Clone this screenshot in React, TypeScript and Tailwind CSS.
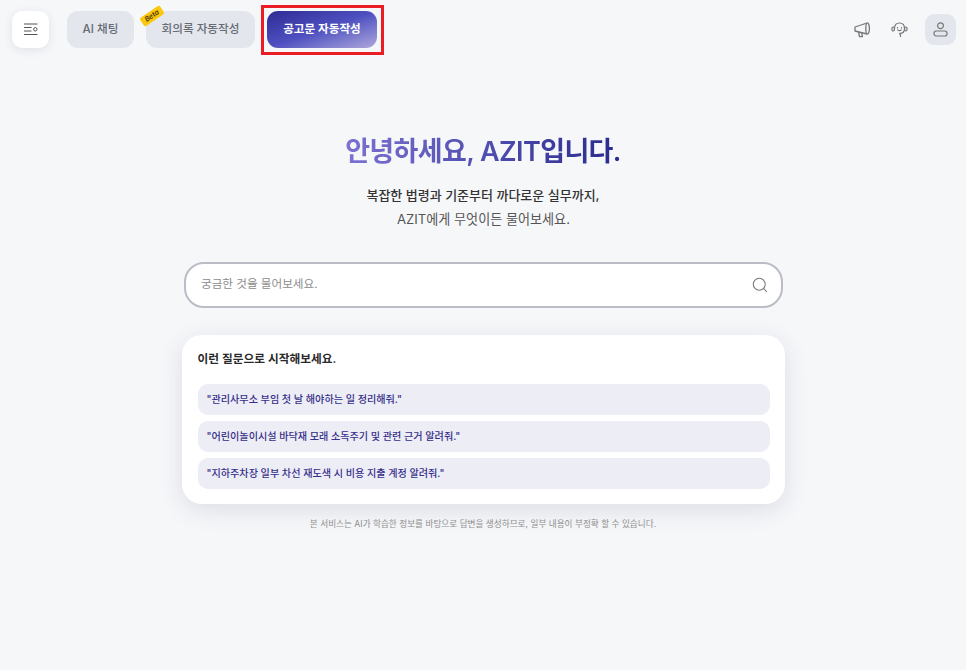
import React from 'react';
import { Search } from 'lucide-react';

const FONT = 'font-["Inter","Noto_Sans_CJK_KR","Noto_Sans",sans-serif]';

const questions = [
  '"관리사무소 부임 첫 날 해야하는 일 정리해줘."',
  '"어린이놀이시설 바닥재 모래 소독주기 및 관련 근거 알려줘."',
  '"지하주차장 일부 차선 재도색 시 비용 지출 계정 알려줘."',
];

const MenuIcon = () => (
  <svg width="14" height="13" viewBox="0 0 14 13" fill="none" stroke="#555" strokeWidth="1">
    <path d="M0 1h13.5M0 4.5h7.5M0 8h7.5M0 11.5h13.5" />
    <circle cx="11.3" cy="6.3" r="1.7" />
  </svg>
);

const MegaphoneIcon = () => (
  <svg width="17" height="17" viewBox="0 0 17 17" fill="none" stroke="#777" strokeWidth="1.3" strokeLinejoin="round">
    <path d="M1 6 L13 2 C14.6 1.6 15.4 4.5 15.4 7.5 C15.4 10.5 14.6 13.4 13 13 L1 10 Z" />
    <path d="M12.5 2.2 C11.6 4 11.6 11 12.5 12.8" />
    <path d="M4.5 10.8 L5.5 15.6 L8.5 15.6 L7.5 11.5" />
  </svg>
);

const HeadsetIcon = () => (
  <svg width="17" height="17" viewBox="0 0 17 17" fill="none" stroke="#777" strokeWidth="1.2" strokeLinecap="round">
    <path d="M3.5 7.5 C3.5 4 5.5 2 8.5 2 C11.5 2 13.5 4 13.5 7.5 C13.5 10.5 11.5 12.5 8.5 12.5" />
    <rect x="1" y="6" width="2.4" height="4" rx="1.2" />
    <rect x="13.6" y="6" width="2.4" height="4" rx="1.2" />
    <path d="M6.5 6.5v.5M10.5 6.5v.5M6.8 9c1 .8 2.4 .8 3.4 0M8.5 12.5c1 .6 1.3 1.6 1 3" />
  </svg>
);

const UserIcon = () => (
  <svg width="15" height="15" viewBox="0 0 15 15" fill="none" stroke="#777" strokeWidth="1.2" strokeLinejoin="round">
    <circle cx="7.5" cy="3.8" r="2.9" />
    <rect x="1" y="9" width="13" height="5" rx="2.2" />
  </svg>
);

export default function App() {
  return (
    <div className={`${FONT} min-h-[670px] bg-[#f6f7f9] flex flex-col`}>
      {/* 상단 메뉴 */}
      <header className="h-[59px] flex items-center justify-between pl-3 pr-[10px]">
        <div className="flex items-center">
          <button className="w-[37px] h-[37px] rounded-[10px] bg-white shadow-[0_2px_10px_rgba(40,40,80,0.1)] flex items-center justify-center">
            <MenuIcon />
          </button>
          <div className="flex items-center gap-3 ml-[18px]">
            <button className="w-[67px] h-[37px] rounded-[11px] bg-[#e3e6ec] text-[11.6px] font-medium text-[#666b73]">AI 채팅</button>
            <button className="relative w-[109px] h-[37px] rounded-[11px] bg-[#e3e6ec] text-[11.6px] font-medium text-[#666b73]">
              회의록 자동작성
              <span className="absolute left-[-6px] top-[0px] w-[24px] h-[10px] rounded-[2px] bg-[#fcc70f] text-[7px] leading-[10px] italic font-semibold text-[#4a3a00] -rotate-[34deg]">Beta</span>
            </button>
            <button className="relative w-[110px] h-[37px] rounded-[11px] bg-gradient-to-br from-[#2e2a94] via-[#4f50c0] to-[#b2a6da] text-[11.6px] font-semibold text-white">
              공고문 자동작성
              <span className="absolute -left-[6px] -right-[7px] -top-[6px] -bottom-[7px] border-[3px] border-[#ea1c24]" />
            </button>
          </div>
        </div>
        <div className="flex items-center">
          <span className="w-[17px] flex justify-center"><MegaphoneIcon /></span>
          <span className="w-[17px] ml-[20px] flex justify-center"><HeadsetIcon /></span>
          <button className="w-[31px] h-[31px] ml-[17px] rounded-[9px] bg-[#e3e6ec] flex items-center justify-center">
            <UserIcon />
          </button>
        </div>
      </header>

      <main className="flex flex-col items-center">
        <h1 className="mt-[72px] h-[42px] text-[27px] leading-[42px] font-semibold tracking-[-0.6px] bg-gradient-to-r from-[#7c72d2] to-[#2a2a8e] bg-clip-text text-transparent">
          안녕하세요, AZIT입니다.
        </h1>
        <p className="mt-[10px] text-[13px] leading-[24px] font-medium text-[#333]">복잡한 법령과 기준부터 까다로운 실무까지,</p>
        <p className="ml-px text-[13.1px] leading-[24px] font-normal text-[#555]">AZIT에게 무엇이든 물어보세요.</p>

        <div className="mt-[31px] ml-px w-[599px] h-[46px] rounded-[20px] border-2 border-[#babcc6] bg-white flex items-center justify-between pl-[15px] pr-[12px]">
          <span className="text-[11.6px] text-[#8c8c8c]">궁금한 것을 물어보세요.</span>
          <Search className="w-[18px] h-[18px] text-[#777]" strokeWidth={1.4} />
        </div>

        <section className="mt-[27px] w-[603px] h-[169px] rounded-[20px] bg-white shadow-[0_6px_24px_rgba(40,40,90,0.12)] pl-[16px] pr-[15px] pt-[15px]">
          <h2 className="text-[11.7px] leading-[18px] font-semibold text-[#2a2a2a]">이런 질문으로 시작해보세요.</h2>
          <ul className="mt-[16px] flex flex-col gap-[6px]">
            {questions.map((q) => (
              <li key={q} className="h-[31px] rounded-[10px] bg-[#ecedf5] pl-[9px] flex items-center text-[10.1px] font-medium text-[#372f8a]">
                {q}
              </li>
            ))}
          </ul>
        </section>

        <p className="mt-[14px] text-[8.65px] leading-[12px] text-[#8e8e8e]">본 서비스는 AI가 학습한 정보를 바탕으로 답변을 생성하므로, 일부 내용이 부정확 할 수 있습니다.</p>
      </main>
    </div>
  );
}
